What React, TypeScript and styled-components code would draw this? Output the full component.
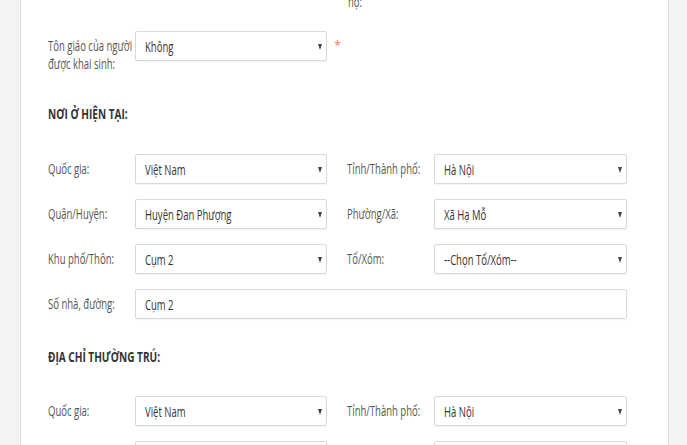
import React from "react";
import styled, { createGlobalStyle } from "styled-components";

const Global = createGlobalStyle`
  html, body { margin: 0; padding: 0; }
  body { background: #f3f3f3; font-family: "Open Sans", "Liberation Sans", sans-serif; overflow: hidden; }
`;

const Page = styled.div`
  display: flex;
  height: 445px;
  background: #f3f3f3;
  padding: 0 18px 0 20px;
  overflow: hidden;
`;

const Card = styled.div`
  flex: 1;
  background: #fff;
  border-left: 1px solid #dedede;
  border-right: 1px solid #dedede;
  padding: 0 40px 0 27px;
  display: flex;
  flex-direction: column;
  overflow: hidden;
`;

const Row = styled.div<{ $mt?: number }>`
  display: grid;
  grid-template-columns: 87px 192px 20px 87px 193px;
  align-items: start;
  margin-top: ${(p) => p.$mt ?? 15}px;
`;

const Label = styled.div<{ $col?: number }>`
  grid-column: ${(p) => p.$col ?? 1};
  padding-top: 6px;
  font-size: 14px;
  line-height: 18px;
  color: #555;
`;

const Squeeze = styled.span<{ $s?: number }>`
  display: inline-block;
  white-space: nowrap;
  transform: scaleX(${(p) => p.$s ?? 0.68});
  transform-origin: left center;
`;

const Field = styled.div<{ $span?: boolean; $col?: number }>`
  grid-column: ${(p) => (p.$span ? "2 / 6" : p.$col ?? 2)};
  position: relative;
  height: 30px;
  box-sizing: border-box;
  border: 1px solid #d9d9d9;
  border-radius: 2px;
  box-shadow: 0 1px 1px rgba(0, 0, 0, 0.05);
  background: #fff;
  display: flex;
  align-items: center;
  padding: 0 9px;
  font-size: 14px;
  color: #333;
`;

const Caret = styled.span`
  position: absolute;
  right: 4px;
  top: 12px;
  width: 0;
  height: 0;
  border-left: 2.5px solid transparent;
  border-right: 2.5px solid transparent;
  border-top: 6px solid #444;
`;

const Required = styled.span`
  grid-column: 3;
  padding: 8px 0 0 7px;
  color: #f07b72;
  font-size: 13px;
  line-height: 12px;
`;

const Heading = styled.h3<{ $mt: number; $mb: number }>`
  margin: ${(p) => p.$mt}px 0 ${(p) => p.$mb}px;
  font-size: 15px;
  line-height: 20px;
  font-weight: 700;
  color: #333;
`;

const TopLabel = styled.div`
  display: grid;
  grid-template-columns: 87px 192px 20px 87px 193px;
  margin-top: -7px;
  font-size: 14px;
  line-height: 18px;
  color: #555;
`;

const TopText = styled.div`
  grid-column: 4;
  padding-left: 1px;
`;

const Select = ({ value, col }: { value: string; col?: number }) => (
  <Field $col={col}>
    <Squeeze>{value}</Squeeze>
    <Caret />
  </Field>
);

const Lbl = ({ text, col }: { text: string; col?: number }) => (
  <Label $col={col}>
    <Squeeze>{text}</Squeeze>
  </Label>
);

export default function App() {
  return (
    <>
      <Global />
      <Page>
        <Card>
          <TopLabel>
            <TopText>
              <Squeeze>họ:</Squeeze>
            </TopText>
          </TopLabel>

          <Row $mt={20}>
            <Label>
              <Squeeze>Tôn giáo của người</Squeeze>
              <br />
              <Squeeze>được khai sinh:</Squeeze>
            </Label>
            <Select value="Không" />
            <Required>*</Required>
          </Row>

          <Heading $mt={30} $mb={31}>
            <Squeeze $s={0.67}>NƠI Ở HIỆN TẠI:</Squeeze>
          </Heading>

          <Row $mt={0}>
            <Lbl text="Quốc gia:" />
            <Select value="Việt Nam" />
            <Lbl text="Tỉnh/Thành phố:" col={4} />
            <Select value="Hà Nội" col={5} />
          </Row>
          <Row>
            <Lbl text="Quận/Huyện:" />
            <Select value="Huyện Đan Phượng" />
            <Lbl text="Phường/Xã:" col={4} />
            <Select value="Xã Hạ Mỗ" col={5} />
          </Row>
          <Row>
            <Lbl text="Khu phố/Thôn:" />
            <Select value="Cụm 2" />
            <Lbl text="Tổ/Xóm:" col={4} />
            <Select value="--Chọn Tổ/Xóm--" col={5} />
          </Row>
          <Row>
            <Lbl text="Số nhà, đường:" />
            <Field $span>
              <Squeeze>Cụm 2</Squeeze>
            </Field>
          </Row>

          <Heading $mt={27} $mb={30}>
            <Squeeze $s={0.67}>ĐỊA CHỈ THƯỜNG TRÚ:</Squeeze>
          </Heading>

          <Row $mt={0}>
            <Lbl text="Quốc gia:" />
            <Select value="Việt Nam" />
            <Lbl text="Tỉnh/Thành phố:" col={4} />
            <Select value="Hà Nội" col={5} />
          </Row>
          <Row>
            <Lbl text="Quận/Huyện:" />
            <Select value="Huyện Đan Phượng" />
            <Lbl text="Phường/Xã:" col={4} />
            <Select value="Xã Hạ Mỗ" col={5} />
          </Row>
        </Card>
      </Page>
    </>
  );
}
